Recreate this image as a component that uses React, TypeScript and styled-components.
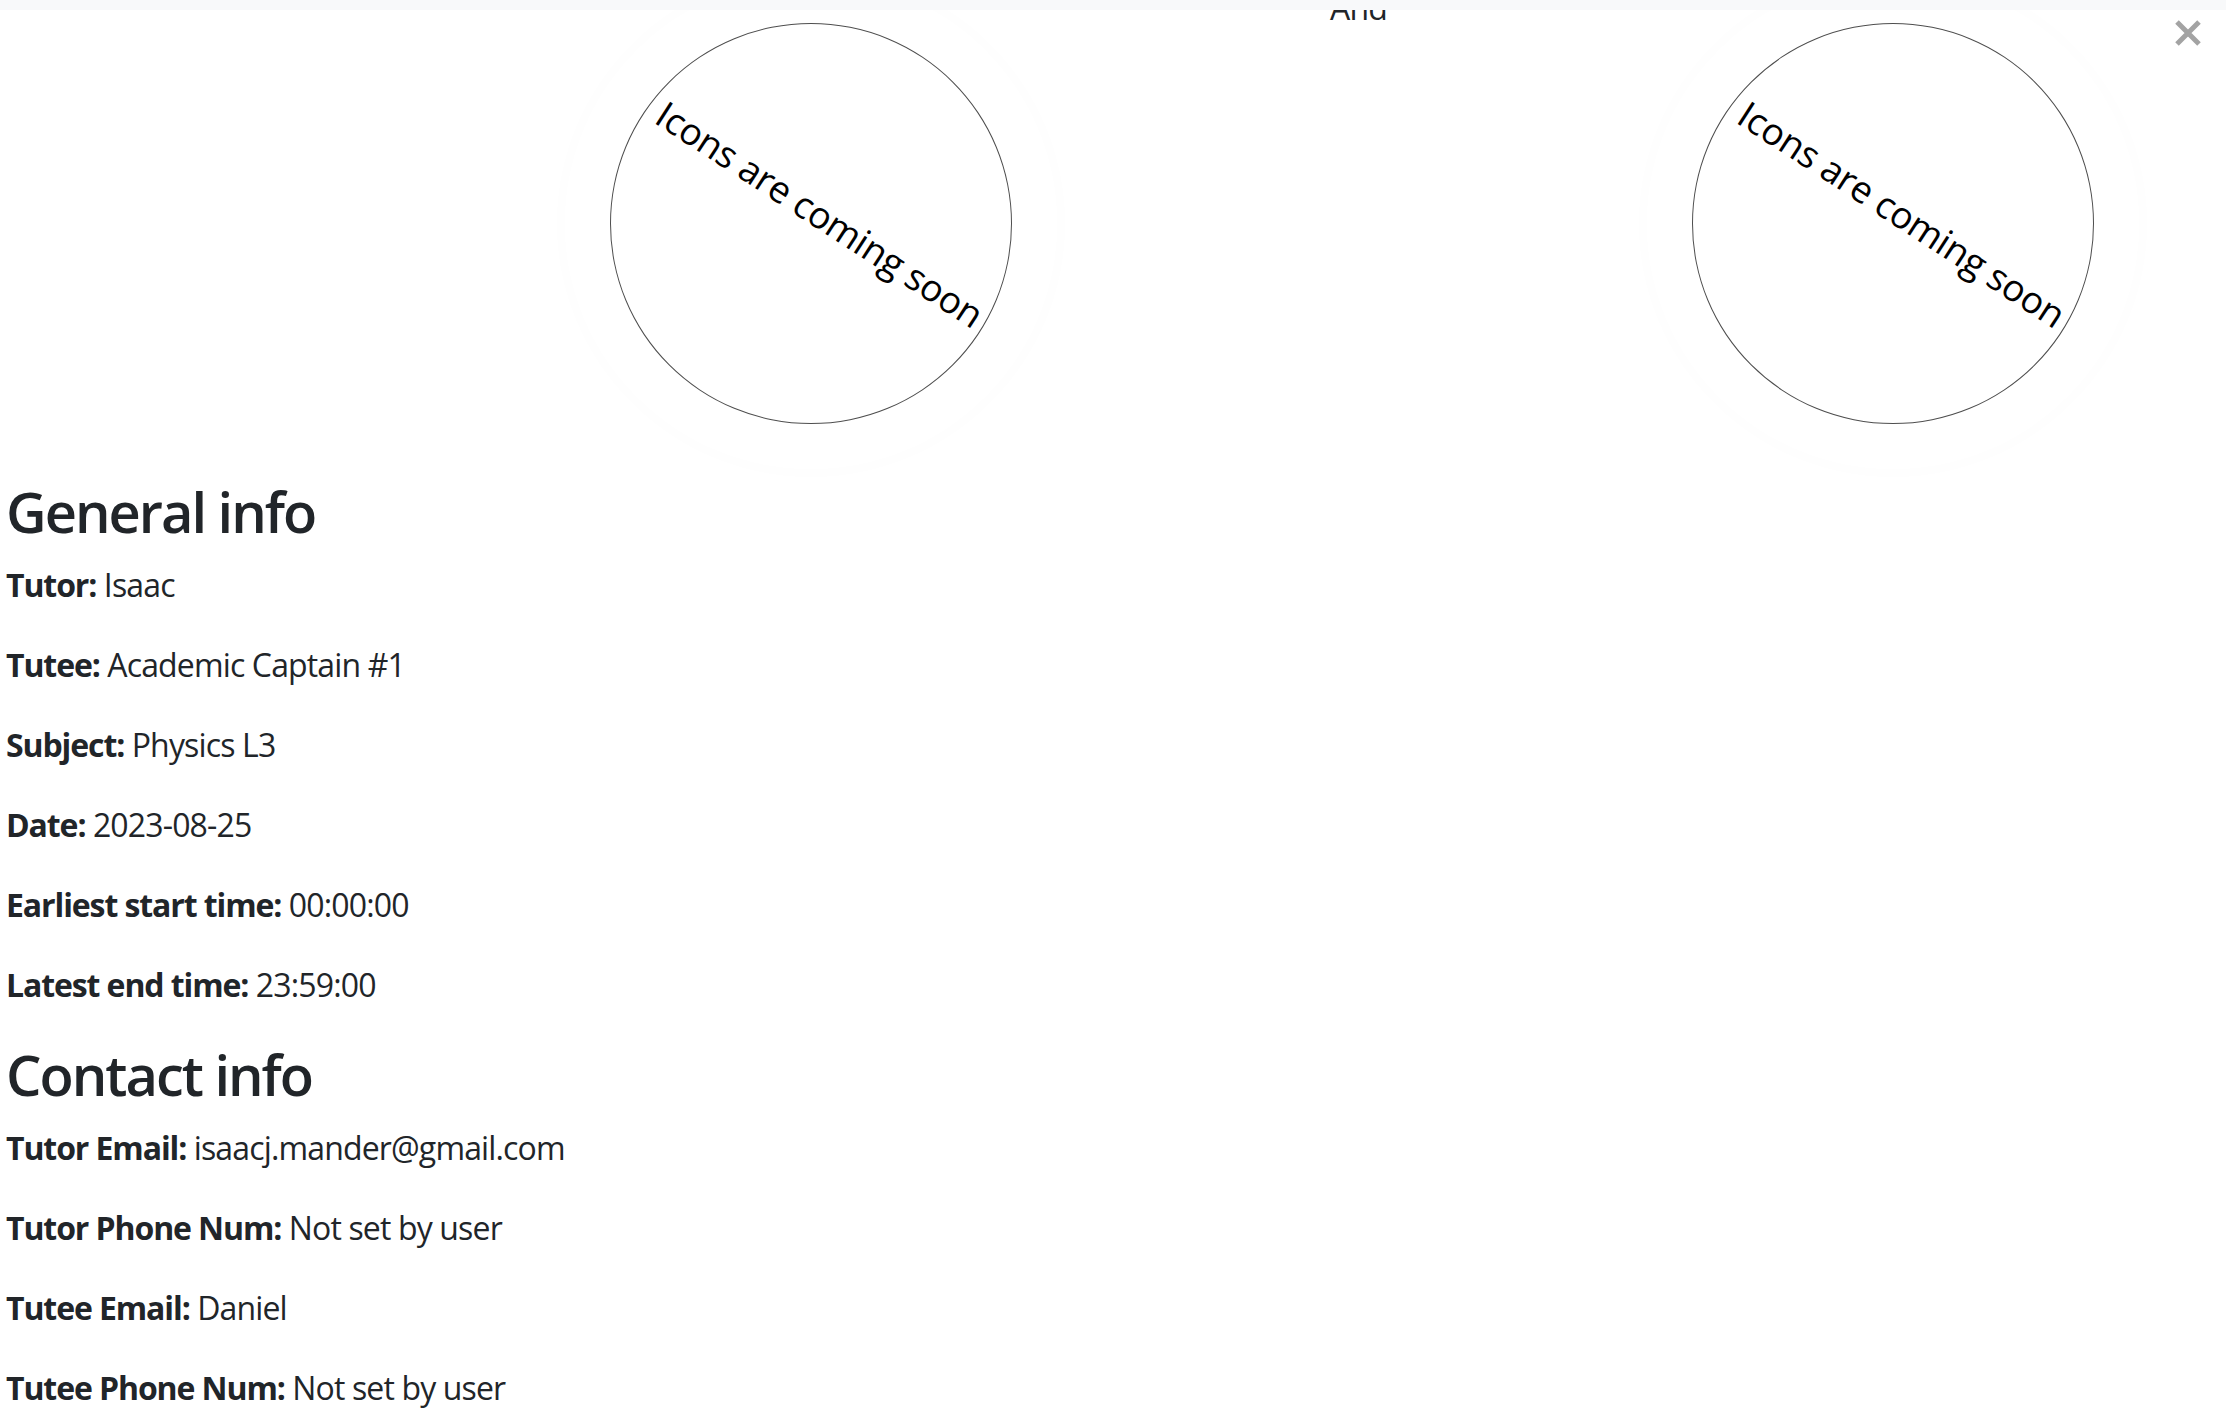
import React from "react";
import styled, { createGlobalStyle } from "styled-components";

const GlobalStyle = createGlobalStyle`
  html, body {
    margin: 0;
    padding: 0;
    background: #ffffff;
  }
  body {
    font-family: "Open Sans", "Noto Sans", sans-serif;
    font-size: 32px;
    line-height: 1.5;
    color: #212529;
  }
  * { box-sizing: border-box; }
`;

const Page = styled.div`
  position: relative;
  min-height: 100vh;
`;

const TopStrip = styled.div`
  position: relative;
  z-index: 2;
  height: 10px;
  background: #f8f9fa;
`;

const Main = styled.main`
  margin-top: -32px;
  padding: 0 6px;
`;

const IconRow = styled.section`
  display: grid;
  grid-template-columns: repeat(3, 541px);
  justify-content: end;
  padding-right: 57px;
  align-items: start;
`;

const IconCol = styled.div`
  display: flex;
  justify-content: flex-start;
  padding-left: 25px;
`;

const Glow = styled.div`
  padding: 45px;
  border-radius: 50%;
  box-shadow: 0 0 40px rgba(0, 0, 0, 0.012);
`;

const Circle = styled.div`
  width: 402px;
  height: 401px;
  border: 1px solid #4e4e4e;
  border-radius: 50%;
  background: #ffffff;
  display: flex;
  align-items: center;
  justify-content: center;
  overflow: visible;
`;

const ComingSoon = styled.span`
  display: block;
  font-family: "Open Sans", "Noto Sans", sans-serif;
  font-size: 37px;
  line-height: 1;
  letter-spacing: -0.3px;
  color: #000000;
  white-space: nowrap;
  transform: translate(9px, -10px) rotate(33deg);
`;

const AndCol = styled.div`
  display: flex;
  justify-content: center;
  padding-top: 6px;
`;

const AndText = styled.p`
  margin: 0;
  font-size: 32px;
  line-height: 48px;
  letter-spacing: -0.8px;
  transform: translateX(7px);
`;

const CloseButton = styled.button`
  position: absolute;
  top: 18px;
  right: 23px;
  width: 30px;
  height: 30px;
  padding: 0;
  border: 0;
  background: transparent;
  cursor: pointer;
  display: flex;
  align-items: center;
  justify-content: center;
  z-index: 3;
`;

const InfoSection = styled.section`
  margin-top: 9px;
`;

const Heading = styled.h3`
  margin: 0 0 16px;
  font-size: 56px;
  font-weight: 600;
  line-height: 1.2;
  letter-spacing: -2px;
  color: #212529;
`;

const InfoLine = styled.p`
  margin: 0 0 32px;
  font-size: 32px;
  line-height: 48px;
  letter-spacing: -0.85px;
`;

const Label = styled.b`
  font-weight: 700;
  letter-spacing: -1.1px;
`;

type Item = { label: string; value: string };

const general: Item[] = [
  { label: "Tutor:", value: "Isaac" },
  { label: "Tutee:", value: "Academic Captain #1" },
  { label: "Subject:", value: "Physics L3" },
  { label: "Date:", value: "2023-08-25" },
  { label: "Earliest start time:", value: "00:00:00" },
  { label: "Latest end time:", value: "23:59:00" },
];

const contact: Item[] = [
  { label: "Tutor Email:", value: "isaacj.mander@gmail.com" },
  { label: "Tutor Phone Num:", value: "Not set by user" },
  { label: "Tutee Email:", value: "Daniel" },
  { label: "Tutee Phone Num:", value: "Not set by user" },
];

const IconPlaceholder = () => (
  <IconCol>
    <Glow>
      <Circle>
        <ComingSoon>Icons are coming soon</ComingSoon>
      </Circle>
    </Glow>
  </IconCol>
);

const CloseIcon = () => (
  <svg width="28" height="26" viewBox="0 0 28 26" aria-hidden="true">
    <path d="M3 2 L25 24 M25 2 L3 24" stroke="#a3a3a3" strokeWidth="5" fill="none" />
  </svg>
);

export default function App() {
  return (
    <Page>
      <GlobalStyle />
      <TopStrip />
      <CloseButton aria-label="Close">
        <CloseIcon />
      </CloseButton>
      <Main>
        <IconRow>
          <IconPlaceholder />
          <AndCol>
            <AndText>And</AndText>
          </AndCol>
          <IconPlaceholder />
        </IconRow>
        <InfoSection>
          <Heading>General info</Heading>
          {general.map((it) => (
            <InfoLine key={it.label}>
              <Label>{it.label}</Label> {it.value}
            </InfoLine>
          ))}
          <Heading>Contact info</Heading>
          {contact.map((it) => (
            <InfoLine key={it.label}>
              <Label>{it.label}</Label> {it.value}
            </InfoLine>
          ))}
        </InfoSection>
      </Main>
    </Page>
  );
}
